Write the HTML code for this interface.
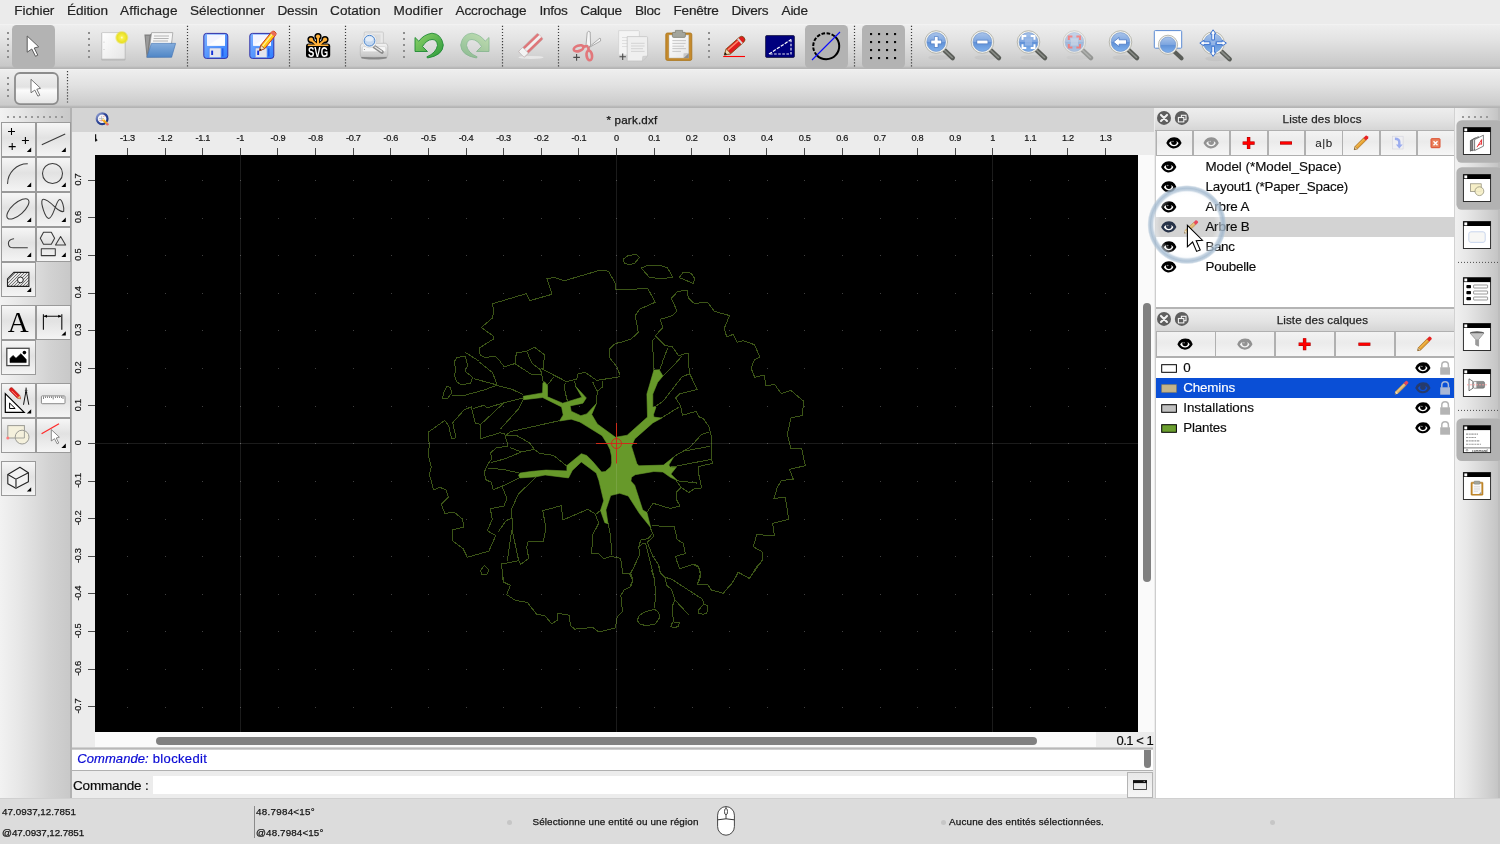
<!DOCTYPE html>
<html lang="fr"><head><meta charset="utf-8"><title>LibreCAD - park.dxf</title>
<style>
*{box-sizing:border-box;margin:0;padding:0}
html,body{width:1500px;height:844px;overflow:hidden;background:#ececec;font-family:"Liberation Sans",sans-serif}
#app{position:relative;width:1500px;height:844px;overflow:hidden;will-change:transform}
.a{position:absolute}
.t{position:absolute;white-space:pre}
svg{position:absolute;overflow:visible}
.lb{position:absolute;border:1px solid #9a9a9a;background:linear-gradient(#f6f6f6,#e2e2e2 45%,#f4f4f4)}
.db{position:absolute;border:1px solid #b4b4b4;background:linear-gradient(#f7f7f7,#ececec 50%,#f5f5f5)}
.chk{position:absolute;background:#b0b0b0;border-radius:5px}
</style></head><body><div id="app">
<div class="a" style="left:0px;top:0px;width:1500px;height:24px;background:#ebebeb"></div>
<div class="a" style="left:0px;top:24px;width:1500px;height:45px;background:linear-gradient(#f6f6f6 0,#eeeeee 1px,#e3e3e3 35%,#c8c8c8 42px,#b4b4b4 44px,#b4b4b4 100%)"></div>
<div class="a" style="left:0px;top:69px;width:1500px;height:39px;background:linear-gradient(#f6f6f6 0,#eeeeee 1px,#e2e2e2 40%,#cbcbcb 36px,#b4b4b4 38px,#b4b4b4 100%)"></div>
<svg style="left:0;top:0" width="1500" height="108" viewBox="0 0 1500 108"><defs>
<linearGradient id="gLens" x1="0" y1="0" x2="0" y2="1"><stop offset="0" stop-color="#a9c4ea"/><stop offset="0.48" stop-color="#7ea6e0"/><stop offset="0.5" stop-color="#5f90d6"/><stop offset="1" stop-color="#7fb0ec"/></linearGradient>
<linearGradient id="gSave" x1="0" y1="0" x2="1" y2="1"><stop offset="0" stop-color="#7fb2ff"/><stop offset="1" stop-color="#2f7dff"/></linearGradient>
<linearGradient id="gFold" x1="0" y1="0" x2="0" y2="1"><stop offset="0" stop-color="#86aedd"/><stop offset="1" stop-color="#4f86c6"/></linearGradient>
<linearGradient id="gUndo" x1="0" y1="0" x2="1" y2="1"><stop offset="0" stop-color="#8fd26a"/><stop offset="1" stop-color="#2b9a3a"/></linearGradient>
<linearGradient id="gPaper" x1="0" y1="0" x2="1" y2="1"><stop offset="0" stop-color="#ffffff"/><stop offset="1" stop-color="#e6e6e6"/></linearGradient>
<linearGradient id="gPrn" x1="0" y1="0" x2="0" y2="1"><stop offset="0" stop-color="#f4f4f4"/><stop offset="1" stop-color="#c4c4c4"/></linearGradient>
<radialGradient id="gStar"><stop offset="0" stop-color="#ffffe0"/><stop offset="0.22" stop-color="#f8f04a"/><stop offset="0.7" stop-color="#e9e024"/><stop offset="1" stop-color="#e8de22" stop-opacity="0"/></radialGradient>
<linearGradient id="gBtn2" x1="0" y1="0" x2="0" y2="1"><stop offset="0" stop-color="#f0f0f0"/><stop offset="0.45" stop-color="#e2e2e2"/><stop offset="0.55" stop-color="#fbfbfb"/><stop offset="1" stop-color="#e4e4e4"/></linearGradient>
<g id="mag"><ellipse cx="3" cy="15.5" rx="11" ry="2.6" fill="#000" opacity="0.045"/><path d="M8 8 L16.5 16" stroke="#5a5d58" stroke-width="4.6" stroke-linecap="round"/><path d="M8.5 8.5 L16 15.5" stroke="#8a8d88" stroke-width="1.6" stroke-linecap="round"/><circle r="11.3" fill="#f3f3ee" stroke="#a9a9a0" stroke-width="0.8"/><circle r="9.4" fill="url(#gLens)" stroke="#6a8fc8" stroke-width="0.6"/></g>
<g id="magS"><path d="M6 6.5 L13.5 13.5" stroke="#5a5d58" stroke-width="4.2" stroke-linecap="round"/><circle r="9.6" fill="#f3f3ee" stroke="#a9a9a0" stroke-width="0.8"/><circle r="7.8" fill="url(#gLens)" stroke="#6a8fc8" stroke-width="0.6"/></g>
<g id="arrowc"><path d="M0 0 L0 16.2 L4.6 13 L8.3 20.3 L10.6 19.2 L7 12 L11.5 10.8 Z" fill="#fff" stroke="#5c5c5c" stroke-width="1" stroke-linejoin="round"/></g>
</defs><rect x="7" y="32" width="2" height="2" fill="#8e8e8e"/><rect x="7" y="38" width="2" height="2" fill="#8e8e8e"/><rect x="7" y="44" width="2" height="2" fill="#8e8e8e"/><rect x="7" y="50" width="2" height="2" fill="#8e8e8e"/><rect x="7" y="56" width="2" height="2" fill="#8e8e8e"/><rect x="88" y="32" width="2" height="2" fill="#8e8e8e"/><rect x="88" y="38" width="2" height="2" fill="#8e8e8e"/><rect x="88" y="44" width="2" height="2" fill="#8e8e8e"/><rect x="88" y="50" width="2" height="2" fill="#8e8e8e"/><rect x="88" y="56" width="2" height="2" fill="#8e8e8e"/><rect x="403" y="32" width="2" height="2" fill="#8e8e8e"/><rect x="403" y="38" width="2" height="2" fill="#8e8e8e"/><rect x="403" y="44" width="2" height="2" fill="#8e8e8e"/><rect x="403" y="50" width="2" height="2" fill="#8e8e8e"/><rect x="403" y="56" width="2" height="2" fill="#8e8e8e"/><rect x="708" y="32" width="2" height="2" fill="#8e8e8e"/><rect x="708" y="38" width="2" height="2" fill="#8e8e8e"/><rect x="708" y="44" width="2" height="2" fill="#8e8e8e"/><rect x="708" y="50" width="2" height="2" fill="#8e8e8e"/><rect x="708" y="56" width="2" height="2" fill="#8e8e8e"/><rect x="7" y="77" width="2" height="2" fill="#8e8e8e"/><rect x="7" y="83" width="2" height="2" fill="#8e8e8e"/><rect x="7" y="89" width="2" height="2" fill="#8e8e8e"/><rect x="7" y="95" width="2" height="2" fill="#8e8e8e"/><path d="M186.9 26.40h1.2M186.9 29.44h1.2M186.9 32.48h1.2M186.9 35.52h1.2M186.9 38.56h1.2M186.9 41.60h1.2M186.9 44.64h1.2M186.9 47.68h1.2M186.9 50.72h1.2M186.9 53.76h1.2M186.9 56.80h1.2M186.9 59.84h1.2M186.9 62.88h1.2M186.9 65.92h1.2" stroke="#3a3a3a" stroke-width="1.2" fill="none"/><path d="M288.9 26.40h1.2M288.9 29.44h1.2M288.9 32.48h1.2M288.9 35.52h1.2M288.9 38.56h1.2M288.9 41.60h1.2M288.9 44.64h1.2M288.9 47.68h1.2M288.9 50.72h1.2M288.9 53.76h1.2M288.9 56.80h1.2M288.9 59.84h1.2M288.9 62.88h1.2M288.9 65.92h1.2" stroke="#3a3a3a" stroke-width="1.2" fill="none"/><path d="M344.9 26.40h1.2M344.9 29.44h1.2M344.9 32.48h1.2M344.9 35.52h1.2M344.9 38.56h1.2M344.9 41.60h1.2M344.9 44.64h1.2M344.9 47.68h1.2M344.9 50.72h1.2M344.9 53.76h1.2M344.9 56.80h1.2M344.9 59.84h1.2M344.9 62.88h1.2M344.9 65.92h1.2" stroke="#3a3a3a" stroke-width="1.2" fill="none"/><path d="M501.9 26.40h1.2M501.9 29.44h1.2M501.9 32.48h1.2M501.9 35.52h1.2M501.9 38.56h1.2M501.9 41.60h1.2M501.9 44.64h1.2M501.9 47.68h1.2M501.9 50.72h1.2M501.9 53.76h1.2M501.9 56.80h1.2M501.9 59.84h1.2M501.9 62.88h1.2M501.9 65.92h1.2" stroke="#3a3a3a" stroke-width="1.2" fill="none"/><path d="M557.9 26.40h1.2M557.9 29.44h1.2M557.9 32.48h1.2M557.9 35.52h1.2M557.9 38.56h1.2M557.9 41.60h1.2M557.9 44.64h1.2M557.9 47.68h1.2M557.9 50.72h1.2M557.9 53.76h1.2M557.9 56.80h1.2M557.9 59.84h1.2M557.9 62.88h1.2M557.9 65.92h1.2" stroke="#3a3a3a" stroke-width="1.2" fill="none"/><path d="M853.9 26.40h1.2M853.9 29.44h1.2M853.9 32.48h1.2M853.9 35.52h1.2M853.9 38.56h1.2M853.9 41.60h1.2M853.9 44.64h1.2M853.9 47.68h1.2M853.9 50.72h1.2M853.9 53.76h1.2M853.9 56.80h1.2M853.9 59.84h1.2M853.9 62.88h1.2M853.9 65.92h1.2" stroke="#3a3a3a" stroke-width="1.2" fill="none"/><path d="M910.9 26.40h1.2M910.9 29.44h1.2M910.9 32.48h1.2M910.9 35.52h1.2M910.9 38.56h1.2M910.9 41.60h1.2M910.9 44.64h1.2M910.9 47.68h1.2M910.9 50.72h1.2M910.9 53.76h1.2M910.9 56.80h1.2M910.9 59.84h1.2M910.9 62.88h1.2M910.9 65.92h1.2" stroke="#3a3a3a" stroke-width="1.2" fill="none"/><path d="M66.9 71.60h1.2M66.9 74.64h1.2M66.9 77.68h1.2M66.9 80.72h1.2M66.9 83.76h1.2M66.9 86.80h1.2M66.9 89.84h1.2M66.9 92.88h1.2M66.9 95.92h1.2M66.9 98.96h1.2M66.9 102.00h1.2" stroke="#3a3a3a" stroke-width="1.2" fill="none"/><rect x="12" y="25" width="43" height="43" rx="4.5" fill="#b3b3b3"/><rect x="805" y="25" width="43" height="43" rx="4.5" fill="#b3b3b3"/><rect x="862" y="25" width="43" height="43" rx="4.5" fill="#b3b3b3"/><use href="#arrowc" x="27.2" y="36"/><rect x="15" y="73" width="42.9" height="31.1" rx="5" fill="url(#gBtn2)" stroke="#8c8c8c" stroke-width="1.8"/><g transform="translate(31 79.3) scale(0.83)"><use href="#arrowc"/></g><rect x="101.3" y="32.6" width="24.2" height="27.8" rx="1" fill="#b0b0b0" opacity="0.9"/><rect x="101.8" y="32.6" width="23.2" height="26.4" rx="0.8" fill="url(#gPaper)" stroke="#c6c6c6" stroke-width="0.8"/><path d="M103.5 42.2h1M103.5 49.5h1" stroke="#c0c0c0" stroke-width="0.8"/><circle cx="121.8" cy="37.6" r="7" fill="url(#gStar)"/><path d="M144.4 34.6 L150 34.6 L152 33 L172 33 L172 57 L146.6 57.4 Z" fill="#7c7c7c"/><path d="M145.6 35.8 L149.6 35.8 L147.6 50 L147 54 Z" fill="#9a9a9a"/><path d="M151.6 32.6 L172.8 32.6 L171.6 43.5 L149 52 Z" fill="#f6f6f6" stroke="#9a9a9a" stroke-width="0.7"/><path d="M154 36h15M153.6 38.5h15M153 41h15" stroke="#b4b4b4" stroke-width="1.2"/><path d="M151.4 43.4 L175.6 43.4 L171.6 57.3 L146.9 57.3 Z" fill="url(#gFold)" stroke="#4a7ab8" stroke-width="0.7" stroke-linejoin="round"/><g transform="translate(203.2 0)"><rect x="0.6" y="33.4" width="24" height="25" rx="2.6" fill="url(#gSave)" stroke="#3232a8" stroke-width="1"/><rect x="3.8" y="34.6" width="18" height="11.2" fill="#f2f4ff"/><path d="M3.8 45.8 L21.8 34.6 L21.8 45.8Z" fill="#fff" opacity="0.7"/><rect x="6" y="48" width="11.8" height="9.6" fill="#e4e4ec" stroke="#4c7ce0" stroke-width="0.5"/><rect x="8" y="50.6" width="1.9" height="4.4" fill="#1432d8"/><rect x="19" y="48.4" width="1.2" height="8" fill="#1c50e8"/></g><g transform="translate(249.2 0)"><rect x="0.6" y="33.4" width="24" height="25" rx="2.6" fill="url(#gSave)" stroke="#3232a8" stroke-width="1"/><rect x="3.8" y="34.6" width="18" height="11.2" fill="#f2f4ff"/><path d="M3.8 45.8 L21.8 34.6 L21.8 45.8Z" fill="#fff" opacity="0.7"/><rect x="6" y="48" width="11.8" height="9.6" fill="#e4e4ec" stroke="#4c7ce0" stroke-width="0.5"/><rect x="8" y="50.6" width="1.9" height="4.4" fill="#1432d8"/><rect x="19" y="48.4" width="1.2" height="8" fill="#1c50e8"/></g><g transform="translate(259.6 50.8) rotate(-51)"><path d="M0 0 L5 -2.6 L22 -2.6 Q24.4 -2.6 24.4 0 Q24.4 2.6 22 2.6 L5 2.6 Z" fill="#ffc814" stroke="#c8321e" stroke-width="0.9" stroke-linejoin="round"/><path d="M5 -0.6 H21" stroke="#fff0a0" stroke-width="1.2"/><path d="M0 0 L5 -2.6 L5 2.6Z" fill="#f4e0c0" stroke="#8a3a1a" stroke-width="0.6"/><path d="M0 0 L2 -1 L2 1Z" fill="#222"/><rect x="20.5" y="-2.6" width="3.2" height="5.2" fill="#e86a5a"/></g><g><g fill="#000" stroke="#000" stroke-width="4.6" stroke-linejoin="round" stroke-linecap="round"><circle cx="318" cy="36.6" r="1.3"/><circle cx="311" cy="39.6" r="1.3"/><circle cx="325" cy="39.6" r="1.3"/><path d="M318 37V45M311.4 40L317 45M324.6 40L319 45" fill="none" stroke-width="4"/></g><rect x="306" y="43.4" width="24.2" height="14.4" rx="2.8" fill="#000"/><g fill="#ffb13b" stroke="#ffb13b" stroke-linecap="round"><circle cx="318" cy="36.6" r="2.1" stroke="none"/><circle cx="311" cy="39.6" r="2.1" stroke="none"/><circle cx="325" cy="39.6" r="2.1" stroke="none"/><path d="M318 37V45M311.4 40L317 45M324.6 40L319 45" fill="none" stroke-width="2.1"/><path d="M308.4 45.3H327.8" stroke-width="1.5"/></g><text transform="translate(318 56.9) scale(0.65 0.97)" text-anchor="middle" font-family="'Liberation Sans',sans-serif" font-weight="bold" font-size="14.6" fill="#fff">SVG</text></g><g><ellipse cx="374" cy="57.7" rx="13.2" ry="1.7" fill="#000" opacity="0.32"/><rect x="364.2" y="32" width="19.2" height="14" rx="1" fill="#e9e9e9" stroke="#c2c2c2" stroke-width="0.7"/><rect x="371" y="34.4" width="9.6" height="8" fill="#dcdcdc"/><path d="M362.6 43.3 L385.4 43.3 Q387.8 43.8 387.8 46.2 L387.8 55 Q387.8 57.3 385.4 57.3 L362.6 57.3 Q360.3 57.3 360.3 55 L360.3 46.2 Q360.3 43.8 362.6 43.3Z" fill="url(#gPrn)" stroke="#b4b4b4" stroke-width="0.7"/><rect x="362.4" y="46.6" width="23.4" height="5.2" rx="1.2" fill="#f7f7f7" stroke="#c6c6c6" stroke-width="0.5"/><circle cx="364.4" cy="49.4" r="0.5" fill="#777"/><path d="M361.8 57.5 Q374 58.6 386.2 57.5" stroke="#7a7a7a" stroke-width="1" fill="none" opacity="0.8"/><path d="M374 46.6 L382 52" stroke="#8a8a8a" stroke-width="3.6" stroke-linecap="round"/><path d="M375 47 L381.6 51.4" stroke="#e6e6e6" stroke-width="1.3" stroke-linecap="round"/><circle cx="369.5" cy="40.7" r="7.1" fill="#f6f6f6" stroke="#c4c4c4" stroke-width="0.5"/><circle cx="369.5" cy="40.7" r="5.4" fill="#c4d8f0" stroke="#4a84cc" stroke-width="1"/><ellipse cx="369.3" cy="39" rx="3.8" ry="2.6" fill="#fff" opacity="0.55"/></g><g transform="translate(414.5 33.4)"><path d="M0.5 4.1 L4.3 7.8 Q9 1.2 17.5 -0.2 Q27 0.4 28.8 11.6 Q28.4 22 13 24.6 L12.4 23.4 Q21.6 19.5 23 12 Q22.5 6 17.5 6.1 Q12 6.5 8 13.1 L13 18.1 L0.5 18.1 Z" fill="url(#gUndo)" stroke="#1f8a34" stroke-width="0.9" stroke-linejoin="round"/></g><g transform="translate(489.5 33.4) scale(-1 1)" opacity="0.42"><path d="M0.5 4.1 L4.3 7.8 Q9 1.2 17.5 -0.2 Q27 0.4 28.8 11.6 Q28.4 22 13 24.6 L12.4 23.4 Q21.6 19.5 23 12 Q22.5 6 17.5 6.1 Q12 6.5 8 13.1 L13 18.1 L0.5 18.1 Z" fill="url(#gUndo)" stroke="#1f8a34" stroke-width="0.9" stroke-linejoin="round"/></g><g opacity="0.8"><ellipse cx="531" cy="57.4" rx="12.5" ry="1.5" fill="#fff" opacity="0.6"/><g transform="translate(521.3 54.4) rotate(-44)"><rect x="0" y="-4.05" width="26.5" height="8.1" rx="1.2" fill="#df5c60" stroke="#b89090" stroke-width="0.5"/><rect x="0" y="-1.5" width="26.5" height="3" fill="#f4f4f4"/><rect x="0" y="-4.05" width="6" height="8.1" rx="0.8" fill="#fbfbfb" stroke="#b0b0b0" stroke-width="0.6"/></g></g><g><path d="M586 45.5 L587.2 32.4 Q588.6 30.4 590.2 32 L590.6 46.5 Z" fill="#f6f6f6" stroke="#9a9a9a" stroke-width="0.8" stroke-linejoin="round"/><path d="M588.5 47.5 L600 38 Q600.8 38.4 600.6 41 L590 47Z" fill="#f6f6f6" stroke="#9a9a9a" stroke-width="0.8" stroke-linejoin="round"/><g fill="none" stroke="#e2777b" stroke-width="2.7"><ellipse cx="578.6" cy="48.3" rx="5" ry="2.7" transform="rotate(-18 578.6 48.3)"/><ellipse cx="589.3" cy="55.4" rx="2.7" ry="4.9" transform="rotate(-8 589.3 55.4)"/><path d="M583.5 46.7 L588 46 M588.3 46.5 L588.6 50.5"/></g><path d="M573.3 57.4h6.6M576.6 54.1v6.6" stroke="#4a4a4a" stroke-width="1.1"/></g><g><path d="M618.6 30.6 H638.4 Q639.4 30.6 639.4 31.6 V55 H618.6Z" fill="#f4f4f4" stroke="#d0d0d0" stroke-width="0.7"/><path d="M622 37.5h12M622 40.5h12M622 43.5h12M622 46.5h12" stroke="#dcdcdc" stroke-width="0.9"/><path d="M627.2 36.6 H646.6 Q647.6 36.6 647.6 37.6 V56 L642.4 61 H627.2 Z" fill="#efefef" stroke="#c4c4c4" stroke-width="0.8"/><path d="M642.4 61 L642.8 56.4 L647.6 56Z" fill="#d4d4d4" stroke="#bdbdbd" stroke-width="0.5"/><path d="M631 43.3h13.6M631 46h13.6M631 48.7h12M631 51.4h13.6" stroke="#d0d0d0" stroke-width="0.9"/><path d="M619.5 56.8h6.4M622.7 53.6v6.4" stroke="#4a4a4a" stroke-width="1.1"/></g><g><rect x="665.8" y="33" width="26" height="27.4" rx="1.6" fill="#c58a2c" stroke="#a87218" stroke-width="0.8"/><rect x="669" y="35" width="19.8" height="23" fill="url(#gPaper)" stroke="#b9b9b0" stroke-width="0.5"/><path d="M683.4 58 L688.8 58 L688.8 53 Z" fill="#8c8c8c"/><path d="M683.4 58 L683.6 53.2 L688.8 53Z" fill="#c6c6c6"/><path d="M672.4 40.6h13.6M672.4 43.4h13.2M672.4 46.2h11.6M672.4 48.6h13.6M672.4 51.4h8.6" stroke="#c2c2c2" stroke-width="0.9"/><path d="M675.4 30.4 H682.6 V32.4 H685 Q685.4 32.4 685.4 33.4 V36.4 Q685.4 37.4 684.4 37.4 H673.6 Q672.4 37.4 672.4 36.4 V33.4 Q672.4 32.4 673 32.4 H675.4Z" fill="#a3a59c" stroke="#77796f" stroke-width="0.7"/></g><path d="M723.2 56.5H745" stroke="#ff0000" stroke-width="1.1"/><g transform="translate(724.3 55) rotate(-41.5)"><path d="M0 0 L5.6 -3.3 L23 -3.3 Q26.4 -3.3 26.4 0 Q26.4 3.3 23 3.3 L5.6 3.3 Z" fill="#e01c1c" stroke="#7a4a14" stroke-width="0.8" stroke-linejoin="round"/><path d="M5.8 -1.4 H20" stroke="#ff8a6a" stroke-width="1.4"/><path d="M0 0 L5.6 -3.3 L5.6 3.3Z" fill="#f0d8b0" stroke="#7a4a14" stroke-width="0.6"/><path d="M0 0 L2.4 -1.4 L2.4 1.4Z" fill="#111"/><rect x="20" y="-3.3" width="1.9" height="6.6" fill="#d8d8d8"/></g><rect x="765.6" y="35.6" width="28.8" height="21.8" rx="1.2" fill="#00007e" stroke="#14143c" stroke-width="0.8"/><path d="M769 54 L791 39.6" stroke="#fff" stroke-width="1.2" stroke-dasharray="3.4 1.3" fill="none"/><path d="M791 39.6 V54 H769" stroke="#e4e4f4" stroke-width="1.2" stroke-dasharray="2.6 1.5" fill="none"/><path d="M816.8 55.2 A13 13 0 1 0 834.6 36.3" stroke="#000" stroke-width="2" fill="none" transform="rotate(0)"/><path d="M834.6 36.3 A13 13 0 0 0 816.8 55.2" stroke="#000" stroke-width="2" stroke-dasharray="3.6 1.5" fill="none"/><path d="M812 60 L840 32" stroke="#0a0aff" stroke-width="1.1"/><rect x="870" y="33" width="2.1" height="2.1" fill="#0a0a0a"/><rect x="870" y="41" width="2.1" height="2.1" fill="#0a0a0a"/><rect x="870" y="49" width="2.1" height="2.1" fill="#0a0a0a"/><rect x="870" y="57" width="2.1" height="2.1" fill="#0a0a0a"/><rect x="878" y="33" width="2.1" height="2.1" fill="#0a0a0a"/><rect x="878" y="41" width="2.1" height="2.1" fill="#0a0a0a"/><rect x="878" y="49" width="2.1" height="2.1" fill="#0a0a0a"/><rect x="878" y="57" width="2.1" height="2.1" fill="#0a0a0a"/><rect x="886" y="33" width="2.1" height="2.1" fill="#0a0a0a"/><rect x="886" y="41" width="2.1" height="2.1" fill="#0a0a0a"/><rect x="886" y="49" width="2.1" height="2.1" fill="#0a0a0a"/><rect x="886" y="57" width="2.1" height="2.1" fill="#0a0a0a"/><rect x="894" y="33" width="2.1" height="2.1" fill="#0a0a0a"/><rect x="894" y="41" width="2.1" height="2.1" fill="#0a0a0a"/><rect x="894" y="49" width="2.1" height="2.1" fill="#0a0a0a"/><rect x="894" y="57" width="2.1" height="2.1" fill="#0a0a0a"/><g transform="translate(936.2 42)"><use href="#mag"/><path d="M-5.6 0H5.6M0 -5.6V5.6" stroke="#4a78c0" stroke-width="4.4"/><path d="M-5 0H5M0 -5V5" stroke="#fff" stroke-width="3"/></g><g transform="translate(982.4 42)"><use href="#mag"/><path d="M-5.8 0H5.8" stroke="#4a78c0" stroke-width="4.4"/><path d="M-5.2 0H5.2" stroke="#fff" stroke-width="3"/></g><g transform="translate(1028.5 42)"><use href="#mag"/><rect x="-3.6" y="-3.6" width="7.2" height="7.2" fill="#9fbdea" opacity="0.7"/><path d="M-6 -2.2V-6H-2.2M2.2 -6H6V-2.2M6 2.2V6H2.2M-2.2 6H-6V2.2" stroke="#fff" stroke-width="1.9" fill="none"/></g><g transform="translate(1074.4 42)" opacity="0.5"><use href="#mag"/><rect x="-3.6" y="-3.6" width="7.2" height="7.2" fill="#bcd0ee" opacity="0.7"/><path d="M-5.6 -2V-5.6H-2M2 -5.6H5.6V-2M5.6 2V5.6H2M-2 5.6H-5.6V2" stroke="#ff2a2a" stroke-width="2" fill="none"/></g><g transform="translate(1120.5 42)"><use href="#mag"/><path d="M-7 0 L-1.4 -4.6 V-2.2 H6 V2.2 H-1.4 V4.6 Z" fill="#fff" stroke="#3f70c0" stroke-width="0.7"/></g><rect x="1154.3" y="30.6" width="27.4" height="17.6" rx="1" fill="#fff" stroke="#5b8bd4" stroke-width="1"/><g transform="translate(1168 44.8)"><use href="#magS"/></g><g transform="translate(1213.1 43.1)"><use href="#mag"/><rect x="-2" y="-2" width="4" height="4" fill="#9dbcea" opacity="0.8"/><g transform="rotate(0)"><path d="M0 -13.3 L2.8 -9.2 H1.3 V-3.2 H-1.3 V-9.2 H-2.8 Z" fill="#fff" stroke="#3a72d0" stroke-width="1" stroke-linejoin="round"/></g><g transform="rotate(90)"><path d="M0 -13.3 L2.8 -9.2 H1.3 V-3.2 H-1.3 V-9.2 H-2.8 Z" fill="#fff" stroke="#3a72d0" stroke-width="1" stroke-linejoin="round"/></g><g transform="rotate(180)"><path d="M0 -13.3 L2.8 -9.2 H1.3 V-3.2 H-1.3 V-9.2 H-2.8 Z" fill="#fff" stroke="#3a72d0" stroke-width="1" stroke-linejoin="round"/></g><g transform="rotate(270)"><path d="M0 -13.3 L2.8 -9.2 H1.3 V-3.2 H-1.3 V-9.2 H-2.8 Z" fill="#fff" stroke="#3a72d0" stroke-width="1" stroke-linejoin="round"/></g></g></svg>
<div class="a" style="left:0px;top:108px;width:71px;height:690px;background:linear-gradient(90deg,#f2f2f2 0,#e8e8e8 25%,#d2d2d2 70%,#c8c8c8 100%)"></div>
<div class="a" style="left:70px;top:108px;width:2px;height:690px;background:#b2b2b2"></div>
<div class="lb" style="left:1px;top:122px;width:35px;height:35.0px;"></div>
<div class="lb" style="left:36px;top:122px;width:35px;height:35.0px;"></div>
<div class="lb" style="left:1px;top:157px;width:35px;height:35.0px;"></div>
<div class="lb" style="left:36px;top:157px;width:35px;height:35.0px;"></div>
<div class="lb" style="left:1px;top:192px;width:35px;height:35.0px;"></div>
<div class="lb" style="left:36px;top:192px;width:35px;height:35.0px;"></div>
<div class="lb" style="left:1px;top:227px;width:35px;height:35.0px;"></div>
<div class="lb" style="left:36px;top:227px;width:35px;height:35.0px;"></div>
<div class="lb" style="left:1px;top:262px;width:35px;height:35.0px;"></div>
<div class="lb" style="left:1px;top:305px;width:35px;height:35.0px;"></div>
<div class="lb" style="left:36px;top:305px;width:35px;height:35.0px;"></div>
<div class="lb" style="left:1px;top:340px;width:35px;height:35.0px;"></div>
<div class="lb" style="left:1px;top:383px;width:35px;height:35.0px;"></div>
<div class="lb" style="left:36px;top:383px;width:35px;height:35.0px;"></div>
<div class="lb" style="left:1px;top:418px;width:35px;height:35.0px;"></div>
<div class="lb" style="left:36px;top:418px;width:35px;height:35.0px;"></div>
<div class="lb" style="left:1px;top:461px;width:35px;height:35.0px;"></div>
<svg style="left:0;top:108px" width="72" height="400" viewBox="0 108 72 400"><rect x="7" y="116" width="2" height="2" fill="#999"/><rect x="13" y="116" width="2" height="2" fill="#999"/><rect x="19" y="116" width="2" height="2" fill="#999"/><rect x="25" y="116" width="2" height="2" fill="#999"/><rect x="31" y="116" width="2" height="2" fill="#999"/><rect x="37" y="116" width="2" height="2" fill="#999"/><rect x="43" y="116" width="2" height="2" fill="#999"/><rect x="49" y="116" width="2" height="2" fill="#999"/><rect x="55" y="116" width="2" height="2" fill="#999"/><rect x="61" y="116" width="2" height="2" fill="#999"/><path d="M8 131.4h7M11.5 127.9v7M21.9 140.4h7M25.4 136.9v7M8.7 146.6h7M12.2 143.1v7" stroke="#000" stroke-width="1.05" fill="none"/><path d="M31.2 147.6 V151.9 H26.799999999999997Z" fill="#000"/><path d="M65.8 147.6 V151.9 H61.4Z" fill="#000"/><path d="M41.8 144.7 L65.2 133.9" fill="none" stroke="#3a3a3a" stroke-width="1.05"/><path d="M7.6 183.4 A19.8 19.8 0 0 1 27.4 163.8" fill="none" stroke="#3a3a3a" stroke-width="1.05" stroke-linecap="round"/><circle cx="52.5" cy="173.5" r="10" fill="none" stroke="#3a3a3a" stroke-width="1.05"/><path d="M31.2 182.6 V186.9 H26.799999999999997Z" fill="#000"/><path d="M65.8 182.6 V186.9 H61.4Z" fill="#000"/><ellipse cx="17.9" cy="208.9" rx="13.8" ry="5.9" transform="rotate(-41.5 17.9 208.9)" fill="none" stroke="#3a3a3a" stroke-width="1.05"/><path d="M55.3 207.4 C50.5 202.5 44 197.5 42.3 199.8 C40.5 203 45 218 48.8 218.4 C51.5 218.5 53.5 212 55.3 207.4 C56.5 204 58 199.5 59.8 199.5 C62 199.5 64.5 208 63.7 211.4 C62.5 212.3 58.5 210.3 55.3 207.4Z" fill="none" stroke="#3a3a3a" stroke-width="1.05"/><path d="M31.2 217.6 V221.9 H26.799999999999997Z" fill="#000"/><path d="M65.8 217.6 V221.9 H61.4Z" fill="#000"/><path d="M13.6 238.8 Q8.4 239.6 8.4 243.4 Q8.6 247.8 13.4 247.8 L27.4 247.8" fill="none" stroke="#3a3a3a" stroke-width="1.05" stroke-linecap="round"/><path d="M40.3 238.3L43.5 232.3H51.3L54.6 238.3L51.3 244.3H43.5ZM55.5 245L60.6 236.5L65.6 245ZM41.3 248.8H55.3V255.6H41.3Z" fill="none" stroke="#3a3a3a" stroke-width="1.05" stroke-linejoin="round"/><path d="M31.2 252.6 V256.9 H26.799999999999997Z" fill="#000"/><path d="M65.8 252.6 V256.9 H61.4Z" fill="#000"/><clipPath id="hc"><path d="M7.5 278.9L13.9 272.4H28.9V286.4H7.5Z"/></clipPath><g clip-path="url(#hc)"><rect x="7" y="272" width="22" height="15" fill="#e4e4e4"/><path d="M2 286L16 272M5 286L19 272M8 286L22 272M11 286L25 272M14 286L28 272M17 286L31 272M20 286L34 272M23 286L37 272M26 286L40 272M-1 286L13 272" stroke="#4a4a4a" stroke-width="0.7"/></g><path d="M7.5 278.9L13.9 272.4H28.9V286.4H7.5Z" fill="none" stroke="#222" stroke-width="1.1"/><circle cx="20.4" cy="279.9" r="2.9" fill="#f4f4f4" stroke="#222" stroke-width="1"/><path d="M31.2 287.6 V291.90000000000003 H26.799999999999997Z" fill="#000"/><text x="18.2" y="331.8" text-anchor="middle" font-family="'Liberation Serif',serif" font-size="29" fill="#000">A</text><path d="M43.4 314.3V329.8M61.8 314.3V329.8M44 316.3H61" stroke="#111" stroke-width="1.1" fill="none"/><path d="M43.8 316.3L47 314.8V317.8ZM61.4 316.3L58.2 314.8V317.8Z" fill="#000"/><path d="M65.8 331.20000000000005 V335.50000000000006 H61.4Z" fill="#000"/><rect x="6.8" y="348.3" width="22.3" height="17.3" fill="#fff" stroke="#4a4a4a" stroke-width="1.3"/><path d="M10 362.6V358.4L13 355.4L16 358.3L20.9 353.7L26.2 359.4V362.6Z" fill="#000" stroke="#000" stroke-width="0.6" stroke-linejoin="round"/><circle cx="24.4" cy="352.6" r="1.8" fill="#000"/><path d="M5.3 393.6V412.4H24.2Z" fill="#fff" stroke="#000" stroke-width="1.2" stroke-linejoin="miter"/><path d="M9.6 403V408.5H15.2Z" fill="#fff" stroke="#000" stroke-width="1"/><g transform="translate(20.6 398.9) rotate(-135)"><path d="M0 0L3 -1.9H13.4Q15 -1.9 15 0Q15 1.9 13.4 1.9H3Z" fill="#e01c1c" stroke="#8a1c10" stroke-width="0.5"/><path d="M0 0L3 -1.9V1.9Z" fill="#e8b070"/><path d="M4 -0.6H12" stroke="#ff8a7a" stroke-width="0.9"/></g><path d="M26.1 387.6V390M26.1 390.5L23.5 404.8M26.1 390.5L28.8 404.8M25 392.5H27.2" stroke="#111" stroke-width="1" fill="none"/><circle cx="26.1" cy="390.6" r="1.2" fill="#444"/><path d="M31.2 409.20000000000005 V413.50000000000006 H26.799999999999997Z" fill="#000"/><rect x="41.4" y="395.9" width="23.6" height="7.8" rx="0.8" fill="#fdfdfd" stroke="#8a8a8a" stroke-width="1"/><path d="M43.5 396.4v2.6M45.5 396.4v1.6M47.5 396.4v1.6M49.5 396.4v1.6M51.5 396.4v1.6M53.2 396.4v3M55.5 396.4v1.6M57.5 396.4v1.6M59.5 396.4v1.6M61.5 396.4v1.6M63 396.4v2.6" stroke="#555" stroke-width="0.7"/><rect x="7.8" y="425.6" width="16.6" height="12.4" fill="#f4f0dc" stroke="#9a9a94" stroke-width="1"/><circle cx="22.1" cy="437.1" r="6.9" fill="#f4f0dc" stroke="#9a9a94" stroke-width="1"/><path d="M15.4 438H24.4V430.6" fill="none" stroke="#a4a49c" stroke-width="1"/><circle cx="7.8" cy="438.1" r="1.5" fill="#ff7a7a"/><path d="M41.6 433.7L59 423.8" stroke="#ff2a2a" stroke-width="1.3"/><g transform="translate(51.3 429.6) scale(0.7)"><use href="#arrowc"/></g><path d="M65.8 443.6 V447.90000000000003 H61.4Z" fill="#000"/><path d="M7.8 474.5L19.9 467.3L28.4 472.8V481.7L15.9 488.3L7.8 483.7Z" fill="#f2f2f2" stroke="#222" stroke-width="1.1" stroke-linejoin="round"/><path d="M7.8 474.5L15.9 479.2L28.4 472.8M15.9 479.2V488.3" fill="none" stroke="#222" stroke-width="1.1"/><path d="M15.9 479.2V488.3" stroke="#777" stroke-width="1.6"/><path d="M31.2 487.20000000000005 V491.50000000000006 H26.799999999999997Z" fill="#000"/></svg>
<div class="a" style="left:72px;top:108px;width:1082px;height:24px;background:#d4d4d4"></div>
<svg style="left:92px;top:110px" width="20" height="20" viewBox="92 110 20 20"><defs><linearGradient id="gLC" x1="0" y1="0" x2="1" y2="1"><stop offset="0" stop-color="#a4b0dc"/><stop offset="0.45" stop-color="#2c4496"/><stop offset="1" stop-color="#1c3484"/></linearGradient></defs><circle cx="102.1" cy="118.7" r="5.4" fill="#f4f4f6" stroke="url(#gLC)" stroke-width="2.2"/><path d="M99 118.6h5M101.6 116v5.4" stroke="#b0b0b8" stroke-width="0.7"/><path d="M99.4 120.6h3.4M103.2 116.6l1.6 -0.8" stroke="#e89090" stroke-width="0.8"/><path d="M102.6 119.4L107 123.8" stroke="#f4a81c" stroke-width="2.2"/><path d="M103 119L104 120" stroke="#ffe890" stroke-width="1.6"/><circle cx="107.4" cy="124.2" r="1.3" fill="#e46a6a"/></svg>
<div class="a" style="left:72px;top:132px;width:1082px;height:23px;background:#ececec"></div>
<div class="a" style="left:72px;top:155px;width:23px;height:592px;background:#ececec"></div>
<div class="a" style="left:95px;top:155px;width:1043px;height:577px;background:#000"></div>
<svg style="left:72px;top:132px" width="1082" height="616" viewBox="72 132 1082 616"><path d="M127 707.5h1M127 669.5h1M127 631.5h1M127 594.5h1M127 556.5h1M127 519.5h1M127 481.5h1M127 443.5h1M127 406.5h1M127 368.5h1M127 330.5h1M127 293.5h1M127 255.5h1M127 218.5h1M127 180.5h1M165 707.5h1M165 669.5h1M165 631.5h1M165 594.5h1M165 556.5h1M165 519.5h1M165 481.5h1M165 443.5h1M165 406.5h1M165 368.5h1M165 330.5h1M165 293.5h1M165 255.5h1M165 218.5h1M165 180.5h1M202 707.5h1M202 669.5h1M202 631.5h1M202 594.5h1M202 556.5h1M202 519.5h1M202 481.5h1M202 443.5h1M202 406.5h1M202 368.5h1M202 330.5h1M202 293.5h1M202 255.5h1M202 218.5h1M202 180.5h1M240 707.5h1M240 669.5h1M240 631.5h1M240 594.5h1M240 556.5h1M240 519.5h1M240 481.5h1M240 443.5h1M240 406.5h1M240 368.5h1M240 330.5h1M240 293.5h1M240 255.5h1M240 218.5h1M240 180.5h1M278 707.5h1M278 669.5h1M278 631.5h1M278 594.5h1M278 556.5h1M278 519.5h1M278 481.5h1M278 443.5h1M278 406.5h1M278 368.5h1M278 330.5h1M278 293.5h1M278 255.5h1M278 218.5h1M278 180.5h1M315 707.5h1M315 669.5h1M315 631.5h1M315 594.5h1M315 556.5h1M315 519.5h1M315 481.5h1M315 443.5h1M315 406.5h1M315 368.5h1M315 330.5h1M315 293.5h1M315 255.5h1M315 218.5h1M315 180.5h1M353 707.5h1M353 669.5h1M353 631.5h1M353 594.5h1M353 556.5h1M353 519.5h1M353 481.5h1M353 443.5h1M353 406.5h1M353 368.5h1M353 330.5h1M353 293.5h1M353 255.5h1M353 218.5h1M353 180.5h1M391 707.5h1M391 669.5h1M391 631.5h1M391 594.5h1M391 556.5h1M391 519.5h1M391 481.5h1M391 443.5h1M391 406.5h1M391 368.5h1M391 330.5h1M391 293.5h1M391 255.5h1M391 218.5h1M391 180.5h1M428 707.5h1M428 669.5h1M428 631.5h1M428 594.5h1M428 556.5h1M428 519.5h1M428 481.5h1M428 443.5h1M428 406.5h1M428 368.5h1M428 330.5h1M428 293.5h1M428 255.5h1M428 218.5h1M428 180.5h1M466 707.5h1M466 669.5h1M466 631.5h1M466 594.5h1M466 556.5h1M466 519.5h1M466 481.5h1M466 443.5h1M466 406.5h1M466 368.5h1M466 330.5h1M466 293.5h1M466 255.5h1M466 218.5h1M466 180.5h1M503 707.5h1M503 669.5h1M503 631.5h1M503 594.5h1M503 556.5h1M503 519.5h1M503 481.5h1M503 443.5h1M503 406.5h1M503 368.5h1M503 330.5h1M503 293.5h1M503 255.5h1M503 218.5h1M503 180.5h1M541 707.5h1M541 669.5h1M541 631.5h1M541 594.5h1M541 556.5h1M541 519.5h1M541 481.5h1M541 443.5h1M541 406.5h1M541 368.5h1M541 330.5h1M541 293.5h1M541 255.5h1M541 218.5h1M541 180.5h1M579 707.5h1M579 669.5h1M579 631.5h1M579 594.5h1M579 556.5h1M579 519.5h1M579 481.5h1M579 443.5h1M579 406.5h1M579 368.5h1M579 330.5h1M579 293.5h1M579 255.5h1M579 218.5h1M579 180.5h1M616 707.5h1M616 669.5h1M616 631.5h1M616 594.5h1M616 556.5h1M616 519.5h1M616 481.5h1M616 443.5h1M616 406.5h1M616 368.5h1M616 330.5h1M616 293.5h1M616 255.5h1M616 218.5h1M616 180.5h1M654 707.5h1M654 669.5h1M654 631.5h1M654 594.5h1M654 556.5h1M654 519.5h1M654 481.5h1M654 443.5h1M654 406.5h1M654 368.5h1M654 330.5h1M654 293.5h1M654 255.5h1M654 218.5h1M654 180.5h1M692 707.5h1M692 669.5h1M692 631.5h1M692 594.5h1M692 556.5h1M692 519.5h1M692 481.5h1M692 443.5h1M692 406.5h1M692 368.5h1M692 330.5h1M692 293.5h1M692 255.5h1M692 218.5h1M692 180.5h1M729 707.5h1M729 669.5h1M729 631.5h1M729 594.5h1M729 556.5h1M729 519.5h1M729 481.5h1M729 443.5h1M729 406.5h1M729 368.5h1M729 330.5h1M729 293.5h1M729 255.5h1M729 218.5h1M729 180.5h1M767 707.5h1M767 669.5h1M767 631.5h1M767 594.5h1M767 556.5h1M767 519.5h1M767 481.5h1M767 443.5h1M767 406.5h1M767 368.5h1M767 330.5h1M767 293.5h1M767 255.5h1M767 218.5h1M767 180.5h1M804 707.5h1M804 669.5h1M804 631.5h1M804 594.5h1M804 556.5h1M804 519.5h1M804 481.5h1M804 443.5h1M804 406.5h1M804 368.5h1M804 330.5h1M804 293.5h1M804 255.5h1M804 218.5h1M804 180.5h1M842 707.5h1M842 669.5h1M842 631.5h1M842 594.5h1M842 556.5h1M842 519.5h1M842 481.5h1M842 443.5h1M842 406.5h1M842 368.5h1M842 330.5h1M842 293.5h1M842 255.5h1M842 218.5h1M842 180.5h1M880 707.5h1M880 669.5h1M880 631.5h1M880 594.5h1M880 556.5h1M880 519.5h1M880 481.5h1M880 443.5h1M880 406.5h1M880 368.5h1M880 330.5h1M880 293.5h1M880 255.5h1M880 218.5h1M880 180.5h1M917 707.5h1M917 669.5h1M917 631.5h1M917 594.5h1M917 556.5h1M917 519.5h1M917 481.5h1M917 443.5h1M917 406.5h1M917 368.5h1M917 330.5h1M917 293.5h1M917 255.5h1M917 218.5h1M917 180.5h1M955 707.5h1M955 669.5h1M955 631.5h1M955 594.5h1M955 556.5h1M955 519.5h1M955 481.5h1M955 443.5h1M955 406.5h1M955 368.5h1M955 330.5h1M955 293.5h1M955 255.5h1M955 218.5h1M955 180.5h1M992 707.5h1M992 669.5h1M992 631.5h1M992 594.5h1M992 556.5h1M992 519.5h1M992 481.5h1M992 443.5h1M992 406.5h1M992 368.5h1M992 330.5h1M992 293.5h1M992 255.5h1M992 218.5h1M992 180.5h1M1030 707.5h1M1030 669.5h1M1030 631.5h1M1030 594.5h1M1030 556.5h1M1030 519.5h1M1030 481.5h1M1030 443.5h1M1030 406.5h1M1030 368.5h1M1030 330.5h1M1030 293.5h1M1030 255.5h1M1030 218.5h1M1030 180.5h1M1068 707.5h1M1068 669.5h1M1068 631.5h1M1068 594.5h1M1068 556.5h1M1068 519.5h1M1068 481.5h1M1068 443.5h1M1068 406.5h1M1068 368.5h1M1068 330.5h1M1068 293.5h1M1068 255.5h1M1068 218.5h1M1068 180.5h1M1105 707.5h1M1105 669.5h1M1105 631.5h1M1105 594.5h1M1105 556.5h1M1105 519.5h1M1105 481.5h1M1105 443.5h1M1105 406.5h1M1105 368.5h1M1105 330.5h1M1105 293.5h1M1105 255.5h1M1105 218.5h1M1105 180.5h1" stroke="#404040" stroke-width="1" fill="none" shape-rendering="crispEdges"/><path d="M127.5 148V155M165.5 148V155M202.5 148V155M240.5 148V155M277.5 148V155M315.5 148V155M353.5 148V155M390.5 148V155M428.5 148V155M466.5 148V155M503.5 148V155M541.5 148V155M578.5 148V155M616.5 148V155M654.5 148V155M691.5 148V155M729.5 148V155M766.5 148V155M804.5 148V155M842.5 148V155M879.5 148V155M917.5 148V155M955.5 148V155M992.5 148V155M1030.5 148V155M1067.5 148V155M1105.5 148V155M88 706.5H95M88 669.5H95M88 631.5H95M88 593.5H95M88 556.5H95M88 518.5H95M88 481.5H95M88 443.5H95M88 405.5H95M88 368.5H95M88 330.5H95M88 293.5H95M88 255.5H95M88 217.5H95M88 180.5H95" stroke="#4a4a4a" stroke-width="1" fill="none" shape-rendering="crispEdges"/><g font-family="'Liberation Sans',sans-serif" font-size="9.2" fill="#141414" stroke="#141414" stroke-width="0.2" text-anchor="middle" letter-spacing="-0.3"><text x="127.4" y="141.3">-1.3</text><text x="165.1" y="141.3">-1.2</text><text x="202.7" y="141.3">-1.1</text><text x="240.3" y="141.3">-1</text><text x="277.9" y="141.3">-0.9</text><text x="315.5" y="141.3">-0.8</text><text x="353.2" y="141.3">-0.7</text><text x="390.8" y="141.3">-0.6</text><text x="428.4" y="141.3">-0.5</text><text x="466.0" y="141.3">-0.4</text><text x="503.6" y="141.3">-0.3</text><text x="541.3" y="141.3">-0.2</text><text x="578.9" y="141.3">-0.1</text><text x="616.5" y="141.3">0</text><text x="654.1" y="141.3">0.1</text><text x="691.7" y="141.3">0.2</text><text x="729.4" y="141.3">0.3</text><text x="767.0" y="141.3">0.4</text><text x="804.6" y="141.3">0.5</text><text x="842.2" y="141.3">0.6</text><text x="879.8" y="141.3">0.7</text><text x="917.5" y="141.3">0.8</text><text x="955.1" y="141.3">0.9</text><text x="992.7" y="141.3">1</text><text x="1030.3" y="141.3">1.1</text><text x="1067.9" y="141.3">1.2</text><text x="1105.6" y="141.3">1.3</text><text transform="translate(81.4 706.1) rotate(-90)">-0.7</text><text transform="translate(81.4 668.5) rotate(-90)">-0.6</text><text transform="translate(81.4 630.9) rotate(-90)">-0.5</text><text transform="translate(81.4 593.3) rotate(-90)">-0.4</text><text transform="translate(81.4 555.7) rotate(-90)">-0.3</text><text transform="translate(81.4 518.0) rotate(-90)">-0.2</text><text transform="translate(81.4 480.4) rotate(-90)">-0.1</text><text transform="translate(81.4 442.8) rotate(-90)">0</text><text transform="translate(81.4 405.2) rotate(-90)">0.1</text><text transform="translate(81.4 367.6) rotate(-90)">0.2</text><text transform="translate(81.4 329.9) rotate(-90)">0.3</text><text transform="translate(81.4 292.3) rotate(-90)">0.4</text><text transform="translate(81.4 254.7) rotate(-90)">0.5</text><text transform="translate(81.4 217.1) rotate(-90)">0.6</text><text transform="translate(81.4 179.5) rotate(-90)">0.7</text></g><path d="M95.6 134.3V141.6" stroke="#161616" stroke-width="1.2" fill="none"/><path d="M96 138.4L97.7 140.2L96 141.3Z" fill="#161616"/><path d="M620.0 289.5L615.7 289.5L615.3 283.3L608.4 271.3L604.0 270.4L599.3 270.4L564.0 280.8L554.7 277.6L546.9 278.4L552.0 294.3L529.6 300.7L526.4 293.6L492.7 303.7L493.6 312.7L492.4 318.0L481.3 327.5L493.7 336.4L493.3 339.1L479.3 348.0L479.6 353.3L480.7 355.3L485.3 357.5L495.3 356.3L500.7 362.0M454.0 362.0L456.7 357.7L465.3 356.1L466.7 362.0M465.3 352.4L479.3 361.3M515.3 362.0L516.3 352.9L526.7 351.3L534.4 347.3L544.7 354.9L543.7 362.0M526.7 351.3L531.3 362.0M620.0 342.0L614.0 344.4L609.3 349.3L609.3 357.3L612.7 362.0M622.9 259.6L628.3 255.3L636.3 254.7L639.7 257.3L634.7 263.1L630.0 264.7L624.7 263.3L622.9 259.6M641.3 268.0L648.0 265.3L659.3 265.3L667.3 267.6L672.9 277.3L660.7 278.7L649.3 277.3L641.3 268.0M679.3 277.6L682.7 272.7L686.7 272.0L691.3 273.3L694.9 278.7L693.1 283.3L679.3 277.6M620.0 289.5L648.0 288.7L655.1 302.3L639.7 309.1L635.3 315.6L638.3 332.4L630.9 339.1L620.0 342.7M655.3 335.7L662.7 327.7L660.3 319.3L672.7 315.6L676.9 310.7L671.3 298.3L677.6 291.6L687.3 290.0L688.3 298.0L694.4 303.6L707.3 302.0L714.3 311.3L729.6 315.6L724.3 328.3L726.7 336.9L733.3 334.3L737.3 342.3L743.3 340.7L754.4 344.7L760.0 357.3L754.9 359.3L753.3 362.0M655.3 335.7L664.7 345.3L672.3 346.9L678.7 355.7L688.0 352.9L688.9 362.0M654.9 338.0L652.7 340.4L653.3 362.0M667.7 348.0L662.4 362.0M682.0 356.0L676.7 362.0M454.0 362.0L456.0 370.0L454.4 374.7L456.7 382.0L461.6 384.9L470.7 383.1L472.7 377.3L466.0 372.0L465.3 368.7L467.6 366.0L466.7 362.0M446.7 386.4L450.4 387.3L451.6 393.3L447.7 398.3L442.4 398.3L444.0 392.0L446.7 386.4M451.6 395.1L457.3 396.0L465.3 395.1L484.0 390.0L496.7 385.3L512.0 389.3L523.3 394.7M479.3 362.0L492.7 372.7L496.7 384.0M474.0 378.7L496.7 384.9M500.0 362.0L504.3 366.7L514.9 363.6L515.3 362.0M514.9 363.6L531.3 374.3L540.7 374.7M531.3 362.0L532.7 364.0L540.7 370.0L543.3 382.0M544.0 362.0L543.3 368.7L541.3 368.7L566.7 381.7M554.0 376.7L547.7 384.7M566.7 381.7L576.7 379.1L578.0 373.7L585.3 372.4L596.7 380.4L620.0 376.7M565.3 383.3L564.0 387.3L567.3 400.7M574.7 381.3L576.0 387.3M592.7 382.0L597.3 391.3L602.7 386.7L602.4 380.7M597.3 391.3L596.3 403.6M613.3 362.0L617.1 367.3L620.0 375.3M523.3 398.0L504.0 402.7L486.7 408.0L484.0 405.3L473.3 408.4M428.0 432.4L444.7 420.4L448.7 426.0L451.7 438.7L456.0 437.7L452.7 422.7L464.0 410.0L471.3 406.7L475.3 423.3L480.7 424.4L480.7 438.7L500.0 432.7L504.7 434.0L508.0 446.0L496.0 448.0L490.7 452.7L491.7 458.7L488.0 464.0L484.7 471.3L484.7 474.0M428.0 432.4L429.3 444.7L428.3 455.3L431.3 467.3L429.3 474.0M504.0 402.7L480.7 424.4M523.3 399.3L518.7 408.7L500.7 428.7M559.3 420.7L510.7 431.6L506.0 435.1L516.0 435.1L529.3 442.7L534.4 449.3L539.3 453.3L553.3 455.3L566.7 466.0M509.6 447.3L521.3 452.0L534.4 449.3M521.3 452.0L505.3 458.7L490.7 462.7M488.0 468.3L502.7 469.3L518.7 472.9M753.3 362.0L751.3 368.7L754.7 377.3L764.0 374.9L766.0 385.7L774.7 384.4L781.3 393.7L790.7 390.3L803.3 400.9L802.7 415.3L790.9 418.0L787.3 434.7L790.9 448.4L801.6 448.4L805.3 465.7L789.3 469.3L791.3 474.0M653.3 362.0L653.6 370.0M662.7 362.0L659.7 369.7M677.3 362.0L663.3 376.0M688.3 362.0L689.6 373.7L682.0 376.9L663.3 400.9L654.0 407.6M689.6 373.7L697.3 389.3L679.3 394.0L675.7 398.0L680.7 406.0L682.4 415.3L696.3 411.3L698.7 416.7L703.3 418.7L708.7 426.0L712.0 438.7L711.3 448.7L711.6 459.3L712.7 463.3L698.0 466.7L698.7 474.0M679.3 406.9L661.3 418.0M708.7 432.0L701.3 434.7L690.0 447.3L674.0 456.4M710.0 446.3L682.7 451.3M711.6 459.3L670.0 467.3M429.3 474.0L433.6 490.0L439.7 487.3L446.0 489.7L448.3 497.3L441.3 504.0L444.7 513.3L454.4 512.4L462.7 519.3L463.7 527.3L452.4 529.7L452.4 540.7L463.3 548.9L467.3 557.3L488.9 551.1L495.7 535.6L487.3 530.7L492.3 519.3L490.3 508.7L504.0 506.0L506.9 498.3L502.0 486.3L493.1 489.7L491.3 482.3L485.6 479.6L484.7 474.0M502.0 486.3L520.0 477.7M536.0 477.3L518.4 494.0L511.3 509.7L512.0 518.0L512.7 532.7L518.7 560.7L520.7 564.4L528.7 558.3L526.7 547.3L528.3 541.3L543.3 542.0L546.0 528.0L542.7 510.7L561.3 505.7L562.9 520.0L587.7 509.3L595.3 514.0L598.7 523.3L592.7 534.7L591.7 553.3L598.7 553.6L604.0 558.7L610.7 556.4L620.0 558.3M512.0 518.0L506.0 520.7L498.4 531.6M511.7 530.0L507.3 561.3M518.0 560.9L501.3 564.0L503.7 582.0L510.7 585.3M484.4 565.3L488.9 569.7L486.7 574.9L482.0 574.9L480.4 570.7L484.4 565.3M596.3 514.0L600.7 510.3M608.0 523.3L610.7 536.7L611.7 554.7M791.3 474.0L793.3 479.3L781.6 480.4L777.3 487.3L774.0 498.4L785.3 497.3L788.7 519.3L772.7 523.3L774.4 535.6L756.7 534.7L753.3 546.7L762.0 551.7L762.9 559.3L749.3 578.4L738.0 572.4L733.3 581.3L730.0 586.0M698.7 474.0L701.6 488.0L694.7 488.4L688.7 492.7L681.3 487.3L676.0 480.7L697.3 483.1M681.3 487.3L676.0 492.7L676.7 500.0L680.0 506.0L670.0 508.4L653.1 503.3L646.7 512.7M652.0 525.7L674.4 526.7L677.1 539.6L683.3 543.1L685.3 553.6L675.3 556.4L679.7 568.7L693.3 564.3L698.7 567.3L700.7 576.0L697.6 584.4L708.0 584.7M650.0 527.3L654.0 536.0L647.3 542.3L652.7 556.0L658.0 564.0L660.7 573.3L665.3 577.7L670.7 578.7L681.3 585.3M665.3 577.7L666.7 586.0M652.7 533.3L648.0 538.7L640.7 540.0L638.7 547.3L640.0 554.0L630.7 573.7L622.7 573.3L620.7 559.3L620.0 558.7M638.7 547.3L642.7 543.3L645.6 543.6L654.7 579.3L654.9 586.0M630.7 573.7L632.9 580.0L630.4 586.0M502.0 570.0L503.3 582.3L510.4 585.3L506.7 594.7L515.3 600.4L527.3 602.4L536.7 614.3L544.7 615.6L551.6 623.6L557.3 620.4L557.7 613.3L569.3 615.3L570.3 625.3L574.7 629.1L583.3 628.4L592.7 627.3L598.7 632.0L615.3 628.0L617.3 616.7L622.7 611.6L621.6 604.9L620.9 595.3L624.0 590.0L630.7 586.7L632.9 580.4L629.7 574.0L622.3 573.3L622.0 570.0M632.0 570.0L629.7 574.0M651.3 570.0L654.0 578.0L655.6 591.3L654.7 608.0M654.7 609.3L658.7 612.7L659.6 617.7L655.3 624.0L646.0 625.7L640.0 624.0L637.3 620.4L639.3 615.3L644.7 612.0L654.7 609.3M762.7 560.0L756.0 567.7L749.6 578.4L738.4 572.3L733.3 581.3L723.3 593.3L711.3 590.0L707.7 584.4L697.3 584.4L700.7 573.3L698.7 566.7L694.0 564.0L679.7 568.7L676.3 560.0M655.3 560.0L658.7 564.7L660.3 573.3L664.7 577.3L670.4 578.4L702.7 599.3L703.7 604.0M664.7 577.3L667.3 586.0L671.3 589.1L674.9 600.0L688.7 614.7M674.9 600.0L672.4 606.0L673.3 622.0M703.7 604.0L707.7 605.6L708.0 610.7L706.4 613.3L703.3 614.4L698.4 613.3L698.3 610.4L703.7 604.0M673.3 622.0L679.7 622.4L678.4 626.0L675.3 627.7L670.7 626.7L671.7 623.7L673.3 622.0" fill="none" stroke="#3c5517" stroke-width="1" stroke-linejoin="round" shape-rendering="crispEdges"/><path d="M523.2 396.3L542.6 392.9L542.9 382.9L544.7 381.9L547.5 385.4L547.5 396.8L562.7 403.2L581.9 397.3L575.7 386.5L586.3 397.9L582.9 403.2L570.1 405.9L571.2 411.2L580.8 415.7L586.7 413.9L596.3 403.7L591.7 414.4L597.3 424.0L615.5 437.3L627.2 435.2L647.5 417.1L646.9 394.1L653.9 370.1L659.2 369.8L662.9 376.0L657.6 382.4L652.8 394.1L652.8 406.9L656.0 407.1L653.5 414.4L653.9 417.1L661.7 418.1L652.8 422.9L634.7 438.9L632.0 445.3L631.5 446.4L636.8 463.5L638.9 465.8L663.5 465.1L673.6 457.1L668.8 465.1L670.4 467.2L676.3 467.2L670.9 474.1L677.3 480.5L670.4 477.3L662.9 472.0L653.9 471.5L635.2 474.7L631.5 477.3L630.9 481.1L634.7 485.3L642.7 509.9L646.9 512.5L650.7 527.5L639.5 513.6L628.3 496.0L619.7 493.3L610.7 495.5L605.9 509.9L608.0 523.7L604.8 522.7L600.5 510.4L603.7 500.8L598.9 480.5L596.3 473.1L581.3 461.9L572.3 470.4L568.5 477.9L545.1 475.0L536.0 476.8L520.0 477.9L518.5 475.3L520.0 473.1L530.7 471.5L546.1 470.1L566.9 470.9L566.9 465.6L581.3 453.7L586.7 455.5L592.5 461.3L601.6 472.0L605.3 471.5L610.7 466.7L611.7 462.9L611.5 456.0L610.1 449.6L607.5 444.3L607.5 444.3L602.1 435.7L579.7 421.9L571.2 419.2L559.5 421.0L563.2 414.9L561.6 406.9L542.6 397.5L523.7 399.7Z" fill="#67992a" stroke="#67992a" stroke-width="0.6" stroke-linejoin="round"/><g stroke="#fff" stroke-opacity="0.105" stroke-width="1" shape-rendering="crispEdges"><line x1="240.5" y1="155" x2="240.5" y2="732"/><line x1="616.5" y1="155" x2="616.5" y2="732"/><line x1="992.5" y1="155" x2="992.5" y2="732"/><line x1="95" y1="443.5" x2="1138" y2="443.5"/></g><g stroke="#cc2c1a" stroke-width="1" fill="none"><circle cx="616.5" cy="443.5" r="5"/><path d="M616.5 423V463.5M596 443.5H637"/></g></svg>
<div class="a" style="left:1138px;top:155px;width:16px;height:577px;background:#fafafa"></div>
<div class="a" style="left:95px;top:732px;width:1001px;height:16px;background:#fafafa"></div>
<div class="a" style="left:1096px;top:732px;width:58px;height:16px;background:#ececec"></div>
<div class="a" style="left:1143.2px;top:303.2px;width:7.6px;height:278.6px;background:#808080;border-radius:4px"></div>
<div class="a" style="left:155.5px;top:737px;width:881px;height:8px;background:#808080;border-radius:4px"></div>
<div class="a" style="left:72px;top:747px;width:1082px;height:3px;background:linear-gradient(#dcdcdc,#b8b8b8 50%,#d8d8d8)"></div>
<div class="a" style="left:72px;top:750px;width:1082px;height:20px;background:#fff"></div>
<div class="a" style="left:72px;top:770px;width:1082px;height:1px;background:#b0b0b0"></div>
<div class="a" style="left:72px;top:771px;width:1082px;height:27px;background:#ececec"></div>
<div class="a" style="left:1144px;top:750px;width:7.2px;height:18px;background:#808080;border-radius:0 0 3.6px 3.6px"></div>
<div class="a" style="left:153px;top:776px;width:974px;height:18px;background:#fff"></div>
<div class="a" style="left:1127px;top:772px;width:26px;height:26px;background:linear-gradient(#e8e8e8,#f6f6f6);border:1px solid #b4b4b4"></div>
<svg style="left:1132px;top:778px" width="16" height="14" viewBox="1132 778 16 14"><rect x="1133.5" y="780.7" width="13" height="8.8" fill="#ececec" stroke="#3a3a3a" stroke-width="0.9"/><rect x="1133" y="780.2" width="14" height="2.9" fill="#111"/><rect x="1143.6" y="781" width="1.2" height="1" fill="#aaa"/></svg>
<div class="a" style="left:1153px;top:747px;width:2px;height:51px;background:#e6e6e6"></div>
<div class="a" style="left:1155px;top:108px;width:299px;height:22px;background:linear-gradient(#eeeeee,#e4e4e4 50%,#d6d6d6)"></div>
<div class="a" style="left:1155px;top:130px;width:299px;height:26px;background:#b0b0b0"></div>
<div class="a" style="left:1155px;top:156px;width:299px;height:151px;background:#fff"></div>
<div class="a" style="left:1155px;top:307px;width:299px;height:1.6px;background:#b4b4b4"></div>
<div class="a" style="left:1155px;top:308.6px;width:299px;height:23px;background:linear-gradient(#eeeeee,#e4e4e4 50%,#d4d4d4)"></div>
<div class="a" style="left:1155px;top:331px;width:299px;height:27px;background:#b0b0b0"></div>
<div class="a" style="left:1155px;top:358px;width:299px;height:440px;background:#fff"></div>
<div class="a" style="left:1155px;top:131px;width:1px;height:667px;background:#cdcdcd"></div>
<div class="a" style="left:1156px;top:217.1px;width:298px;height:19.6px;background:#d3d3d3"></div>
<div class="a" style="left:1156px;top:378px;width:298px;height:19.8px;background:#0a4fd6"></div>
<div class="a" style="left:1156.5px;top:131px;width:35.6px;height:24px;border:none;background:linear-gradient(#f3f3f3,#ebebeb 45%,#f6f6f6)"></div>
<div class="a" style="left:1193.86px;top:131px;width:35.6px;height:24px;border:none;background:linear-gradient(#f3f3f3,#ebebeb 45%,#f6f6f6)"></div>
<div class="a" style="left:1231.22px;top:131px;width:35.6px;height:24px;border:none;background:linear-gradient(#f3f3f3,#ebebeb 45%,#f6f6f6)"></div>
<div class="a" style="left:1268.58px;top:131px;width:35.6px;height:24px;border:none;background:linear-gradient(#f3f3f3,#ebebeb 45%,#f6f6f6)"></div>
<div class="a" style="left:1305.94px;top:131px;width:35.6px;height:24px;border:none;background:linear-gradient(#f3f3f3,#ebebeb 45%,#f6f6f6)"></div>
<div class="a" style="left:1343.3px;top:131px;width:35.6px;height:24px;border:none;background:linear-gradient(#f3f3f3,#ebebeb 45%,#f6f6f6)"></div>
<div class="a" style="left:1380.66px;top:131px;width:35.6px;height:24px;border:none;background:linear-gradient(#f3f3f3,#ebebeb 45%,#f6f6f6)"></div>
<div class="a" style="left:1418.02px;top:131px;width:35.6px;height:24px;border:none;background:linear-gradient(#f3f3f3,#ebebeb 45%,#f6f6f6)"></div>
<div class="a" style="left:1156.5px;top:332px;width:58px;height:24.4px;border:none;background:linear-gradient(#f3f3f3,#ebebeb 45%,#f6f6f6)"></div>
<div class="a" style="left:1216.28px;top:332px;width:58px;height:24.4px;border:none;background:linear-gradient(#f3f3f3,#ebebeb 45%,#f6f6f6)"></div>
<div class="a" style="left:1276.06px;top:332px;width:58px;height:24.4px;border:none;background:linear-gradient(#f3f3f3,#ebebeb 45%,#f6f6f6)"></div>
<div class="a" style="left:1335.84px;top:332px;width:58px;height:24.4px;border:none;background:linear-gradient(#f3f3f3,#ebebeb 45%,#f6f6f6)"></div>
<div class="a" style="left:1395.62px;top:332px;width:58px;height:24.4px;border:none;background:linear-gradient(#f3f3f3,#ebebeb 45%,#f6f6f6)"></div>
<svg style="left:1140px;top:108px" width="320" height="340" viewBox="1140 108 320 340"><defs>
<g id="eye"><path d="M-7.7 0.3 Q-6.6 -3.4 -3.6 -4.8 Q0 -6.2 3.8 -4.9 Q6.4 -3.6 7.6 0.3 Q6.6 2.6 4.4 4.2 Q1.6 5.9 -1 5.6 Q-4.2 5 -5.6 3.2 Q-7 1.6 -7.7 0.3Z"/><path d="M-5 0.2 Q-3.6 -2.2 0 -2.4 Q3.4 -2.2 4.6 0.2 Q3 3.5 0 3.5 Q-3.2 3.5 -5 0.2Z" fill="#fff" class="ew"/><circle cx="0" cy="-0.5" r="2.75"/><circle cx="-1" cy="-1.3" r="0.7" fill="#9a9a9a"/></g>
<g id="lock"><path d="M-3.3 0 V-2.6 Q-3.3 -6 0 -6 Q3.3 -6 3.3 -2.6 V0" fill="none" stroke-width="1.5"/><rect x="-4.9" y="-0.4" width="9.8" height="7.4" stroke="none"/></g>
<g id="pclT"><path d="M0 0 L2.6 -1.2 H14 V1.2 H2.6Z" fill="#e6a030" stroke="#9a6418" stroke-width="0.5"/><path d="M0 0 L2.6 -1.2 V1.2Z" fill="#e8d4a8" stroke="#9a6418" stroke-width="0.3"/><path d="M0 0 L1 -0.5 V0.5Z" fill="#333"/><path d="M14 -1.3 H17 Q17.9 -1.3 17.9 0 Q17.9 1.3 17 1.3 H14Z" fill="#e62222"/><path d="M3 -0.3H14" stroke="#f6c860" stroke-width="0.6"/></g><g id="pcl"><path d="M0 0 L2.6 -1.2 H14 V1.2 H2.6Z" fill="#dcb46e" stroke="#b88a3c" stroke-width="0.4"/><path d="M0 0 L2.6 -1.2 V1.2Z" fill="#f0e2c4"/><path d="M0 0 L1 -0.5 V0.5Z" fill="#444"/><path d="M14 -1.3 H17 Q17.9 -1.3 17.9 0 Q17.9 1.3 17 1.3 H14Z" fill="#e8485c"/><path d="M3 -0.3H14" stroke="#f0d498" stroke-width="0.6"/></g>

</defs><circle cx="1164" cy="117.9" r="7" fill="#5e5e5e"/><path d="M1161 114.9l6 6M1167 114.9l-6 6" stroke="#f0f0f0" stroke-width="2.1" stroke-linecap="round"/><circle cx="1181.8" cy="117.9" r="7" fill="#5e5e5e"/><rect x="1181.4" y="115.30000000000001" width="4.6" height="4.4" fill="none" stroke="#f2f2f2" stroke-width="1.1"/><rect x="1178.4" y="117.5" width="5.4" height="4.4" fill="#5e5e5e" stroke="#f2f2f2" stroke-width="1.1"/><circle cx="1164" cy="318.9" r="7" fill="#5e5e5e"/><path d="M1161 315.9l6 6M1167 315.9l-6 6" stroke="#f0f0f0" stroke-width="2.1" stroke-linecap="round"/><circle cx="1181.8" cy="318.9" r="7" fill="#5e5e5e"/><rect x="1181.4" y="316.29999999999995" width="4.6" height="4.4" fill="none" stroke="#f2f2f2" stroke-width="1.1"/><rect x="1178.4" y="318.5" width="5.4" height="4.4" fill="#5e5e5e" stroke="#f2f2f2" stroke-width="1.1"/><use href="#eye" x="1174.0" y="142.8" fill="#000"/><use href="#eye" x="1211.2" y="142.8" fill="#000" opacity="0.38"/><path d="M1242.6 143.1H1254.6M1248.6 137.1V149.1" stroke="#a00000" stroke-width="3.4" fill="none"/><path d="M1243.0 143.1H1254.1999999999998M1248.6 137.5V148.7" stroke="#ff0000" stroke-width="2.5" fill="none"/><path d="M1280.0 143H1292.0" stroke="#a00000" stroke-width="3.2" fill="none"/><path d="M1280.4 143H1291.6" stroke="#ff0000" stroke-width="2.3" fill="none"/><text x="1323.9" y="147.4" text-anchor="middle" font-family="'Liberation Sans',sans-serif" font-size="11.6" fill="#111" letter-spacing="0.5">a|b</text><g transform="translate(1354.3 149.6) rotate(-45) scale(1.05)"><use href="#pclT" transform="scale(1 1.35)"/></g><g transform="translate(1397.9 142.6)" opacity="0.75"><rect x="-5.4" y="-6.4" width="10.6" height="12.8" fill="#f0f0f4" stroke="#c8c8d8" stroke-width="0.6"/><path d="M-3 -5 Q2.6 -5 2.6 -0.5 V2 H4.8 L1.4 6 L-2 2 H0.2 V-0.5 Q0.2 -2.6 -3 -2.6Z" fill="#7f96f0"/></g><g transform="translate(1435.5 143.2)"><rect x="-4.5" y="-4.5" width="9" height="9" rx="0.6" fill="#e9805c" stroke="#dc4c2c" stroke-width="1"/><path d="M-2 -2l4 4M2 -2l-4 4" stroke="#fff" stroke-width="1.4"/></g><use href="#eye" x="1185.1" y="344" fill="#000"/><use href="#eye" x="1244.9" y="344" fill="#000" opacity="0.38"/><path d="M1298.6 344.2H1310.6M1304.6 338.2V350.2" stroke="#a00000" stroke-width="3.4" fill="none"/><path d="M1299.0 344.2H1310.1999999999998M1304.6 338.59999999999997V349.8" stroke="#ff0000" stroke-width="2.5" fill="none"/><path d="M1358.4 344.2H1370.4" stroke="#a00000" stroke-width="3.2" fill="none"/><path d="M1358.8000000000002 344.2H1370.0" stroke="#ff0000" stroke-width="2.3" fill="none"/><g transform="translate(1417.7 350.6) rotate(-45) scale(1.05)"><use href="#pclT" transform="scale(1 1.35)"/></g><use href="#eye" x="1168.8" y="166.8" fill="#000"/><use href="#eye" x="1168.8" y="186.8" fill="#000"/><use href="#eye" x="1168.8" y="206.8" fill="#000"/><use href="#eye" x="1168.8" y="226.8" fill="#273349"/><use href="#eye" x="1168.8" y="246.8" fill="#000"/><use href="#eye" x="1168.8" y="266.8" fill="#000"/><g transform="translate(1184.4 233.2) rotate(-43)"><use href="#pcl" transform="scale(1 1.3)"/></g><rect x="1161.7" y="364.7" width="14.7" height="7.6" fill="#ffffff" stroke="#000" stroke-width="1"/><use href="#eye" x="1422.9" y="367.7" fill="#000"/><use href="#lock" x="1445.1" y="367.7" fill="#b4b4b4" stroke="#b4b4b4"/><rect x="1161.7" y="384.7" width="14.7" height="7.6" fill="#c4b48a" stroke="#8a8264" stroke-width="0.7"/><g transform="translate(1422.9 387.7)" fill="#273b6c"><path d="M-7.7 0.3 Q-6.6 -3.4 -3.6 -4.8 Q0 -6.2 3.8 -4.9 Q6.4 -3.6 7.6 0.3 Q6.6 2.6 4.4 4.2 Q1.6 5.9 -1 5.6 Q-4.2 5 -5.6 3.2 Q-7 1.6 -7.7 0.3Z"/><path d="M-5 0.2 Q-3.6 -2.2 0 -2.4 Q3.4 -2.2 4.6 0.2 Q3 3.5 0 3.5 Q-3.2 3.5 -5 0.2Z" fill="#0a4fd6"/><circle cx="0" cy="-0.5" r="2.75"/></g><use href="#lock" x="1445.1" y="387.7" fill="#aab8d6" stroke="#aab8d6"/><rect x="1161.7" y="404.7" width="14.7" height="7.6" fill="#c0c0c0" stroke="#000" stroke-width="1"/><use href="#eye" x="1422.9" y="407.7" fill="#000"/><use href="#lock" x="1445.1" y="407.7" fill="#b4b4b4" stroke="#b4b4b4"/><rect x="1161.7" y="424.7" width="14.7" height="7.6" fill="#6b9f2f" stroke="#000" stroke-width="1"/><use href="#eye" x="1422.9" y="427.7" fill="#000"/><use href="#lock" x="1445.1" y="427.7" fill="#b4b4b4" stroke="#b4b4b4"/><g transform="translate(1395 394.2) rotate(-45)"><use href="#pcl" transform="scale(1 1.3)"/></g></svg>
<div class="a" style="left:1455px;top:108px;width:45px;height:690px;background:linear-gradient(90deg,#f0f0f0 0,#e8e8e8 25%,#d2d2d2 70%,#c2c2c2 100%)"></div>
<div class="a" style="left:1454px;top:108px;width:1px;height:690px;background:#d2d2d2"></div>
<div class="a" style="left:1498px;top:108px;width:2px;height:690px;background:#bdbdbd"></div>
<svg style="left:1455px;top:108px" width="45" height="420" viewBox="1455 108 45 420"><rect x="1462" y="116" width="2" height="2" fill="#999"/><rect x="1468" y="116" width="2" height="2" fill="#999"/><rect x="1474" y="116" width="2" height="2" fill="#999"/><rect x="1480" y="116" width="2" height="2" fill="#999"/><rect x="1486" y="116" width="2" height="2" fill="#999"/><rect x="1456.4" y="120.2" width="46" height="42.6" rx="5.5" fill="#b2b2b2"/><rect x="1456.4" y="167.2" width="46" height="42.6" rx="5.5" fill="#b2b2b2"/><rect x="1456.4" y="418.4" width="46" height="42.6" rx="5.5" fill="#b2b2b2"/><path d="M1458 262.4H1500" stroke="#4a4a4a" stroke-width="1" stroke-dasharray="1 2" fill="none"/><path d="M1458 410.4H1500" stroke="#4a4a4a" stroke-width="1" stroke-dasharray="1 2" fill="none"/><rect x="1463.4" y="127.60000000000001" width="27.2" height="26.9" fill="#fff" stroke="#1c1c1c" stroke-width="0.9"/><rect x="1463.4" y="127.60000000000001" width="27.2" height="4.4" fill="#000"/><rect x="1464.3" y="128.4" width="2.9" height="2.9" fill="#fff"/><rect x="1463.4" y="174.6" width="27.2" height="26.9" fill="#fff" stroke="#1c1c1c" stroke-width="0.9"/><rect x="1463.4" y="174.6" width="27.2" height="4.4" fill="#000"/><rect x="1464.3" y="175.39999999999998" width="2.9" height="2.9" fill="#fff"/><rect x="1463.4" y="221.6" width="27.2" height="26.9" fill="#fff" stroke="#1c1c1c" stroke-width="0.9"/><rect x="1463.4" y="221.6" width="27.2" height="4.4" fill="#000"/><rect x="1464.3" y="222.39999999999998" width="2.9" height="2.9" fill="#fff"/><rect x="1463.4" y="277.7" width="27.2" height="26.9" fill="#fff" stroke="#1c1c1c" stroke-width="0.9"/><rect x="1463.4" y="277.7" width="27.2" height="4.4" fill="#000"/><rect x="1464.3" y="278.5" width="2.9" height="2.9" fill="#fff"/><rect x="1463.4" y="323.59999999999997" width="27.2" height="26.9" fill="#fff" stroke="#1c1c1c" stroke-width="0.9"/><rect x="1463.4" y="323.59999999999997" width="27.2" height="4.4" fill="#000"/><rect x="1464.3" y="324.4" width="2.9" height="2.9" fill="#fff"/><rect x="1463.4" y="369.59999999999997" width="27.2" height="26.9" fill="#fff" stroke="#1c1c1c" stroke-width="0.9"/><rect x="1463.4" y="369.59999999999997" width="27.2" height="4.4" fill="#000"/><rect x="1464.3" y="370.4" width="2.9" height="2.9" fill="#fff"/><rect x="1463.4" y="425.7" width="27.2" height="26.9" fill="#fff" stroke="#1c1c1c" stroke-width="0.9"/><rect x="1463.4" y="425.7" width="27.2" height="4.4" fill="#000"/><rect x="1464.3" y="426.5" width="2.9" height="2.9" fill="#fff"/><rect x="1463.4" y="472.59999999999997" width="27.2" height="26.9" fill="#fff" stroke="#1c1c1c" stroke-width="0.9"/><rect x="1463.4" y="472.59999999999997" width="27.2" height="4.4" fill="#000"/><rect x="1464.3" y="473.4" width="2.9" height="2.9" fill="#fff"/><g transform="translate(1477 143.2)"><path d="M-6.6 -2.6 L-1.6 -5.4 V5.2 L-6.6 8Z" fill="#8a8a8a" stroke="#333" stroke-width="0.6"/><path d="M-4.6 -3.4 L1.4 -6.6 V4.6 L-4.6 7.6Z" fill="#d8d8d8" stroke="#333" stroke-width="0.6"/><path d="M-2.4 -3.6 L6.4 -8 V3 L-2.4 7.4Z" fill="#fff" stroke="#333" stroke-width="0.6"/><path d="M0 4 L4.6 -3.6 L4.4 1.6 M1.2 2.2 L4.4 0.2" stroke="#e8262a" stroke-width="0.9" fill="none"/></g><rect x="1470.6" y="183.79999999999998" width="10.6" height="7.6" fill="#f6efc8" stroke="#8a8670" stroke-width="0.7"/><circle cx="1479.4" cy="191.2" r="4.4" fill="#f6efc8" fill-opacity="0.9" stroke="#8a8670" stroke-width="0.7"/><rect x="1468.8" y="231.79999999999998" width="16.4" height="10.6" rx="2.2" fill="#f7f7f5" stroke="#c4d2ec" stroke-width="0.9"/><rect x="1466.4" y="284.9" width="4.6" height="3.4" rx="0.8" fill="#000"/><rect x="1473.6" y="285.0" width="14" height="3" rx="0.5" fill="#fff" stroke="#555" stroke-width="0.6"/><rect x="1466.4" y="290.9" width="4.6" height="3.4" rx="0.8" fill="#000"/><rect x="1473.6" y="291.0" width="14" height="3" rx="0.5" fill="#fff" stroke="#555" stroke-width="0.6"/><rect x="1466.4" y="296.9" width="4.6" height="3.4" rx="0.8" fill="#000"/><rect x="1473.6" y="297.0" width="14" height="3" rx="0.5" fill="#fff" stroke="#555" stroke-width="0.6"/><g transform="translate(1477 323.2)"><ellipse cx="0" cy="9.6" rx="7" ry="1.6" fill="#5a5a5a"/><path d="M-7 9.8 L-1.3 16.4 V21.6 L1.6 23 V16.4 L7 9.8Z" fill="#c4c4c4" stroke="#6a6a6a" stroke-width="0.5"/><path d="M-1.3 16.4 V21.6 L1.6 23 V16.4" fill="#9a9a9a"/></g><g transform="translate(1477 384.8)"><path d="M-8 -6 L-4 -3.4 V3.4 L-8 6Z" fill="#fff" stroke="#444" stroke-width="0.7"/><rect x="-4" y="-3.4" width="11.6" height="6.8" rx="1.6" fill="#8a8a8a" stroke="#555" stroke-width="0.5"/><rect x="-3.2" y="-3" width="2.6" height="6" fill="#f4f4f4"/><path d="M-10 0H10" stroke="#ff9a9a" stroke-width="0.8" stroke-dasharray="2 1"/></g><path d="M1466 434.1h12M1466 437.5h10M1466 440.90000000000003h14M1466 444.3h15" stroke="#9a9a9a" stroke-width="1.1" stroke-dasharray="2.4 0.7 1.6 0.6"/><text x="1472" y="451.5" fill="#111" font-family="'Liberation Sans',sans-serif" font-size="3" textLength="15.6" lengthAdjust="spacingAndGlyphs">command</text><path d="M1463.4 447.90000000000003H1490.6" stroke="#222" stroke-width="0.6"/><circle cx="1467" cy="450.3" r="0.9" fill="none" stroke="#333" stroke-width="0.4"/><g transform="translate(1477 488.59999999999997)"><rect x="-6" y="-6.4" width="12" height="13" rx="0.8" fill="#c58a2c" stroke="#a87218" stroke-width="0.5"/><rect x="-4.4" y="-5" width="8.8" height="10.4" fill="#f7f7f7"/><path d="M2 5.4 H4.4 V3Z" fill="#9a9a9a"/><rect x="-3" y="-7.6" width="6" height="3.2" rx="0.8" fill="#a3a59c" stroke="#77796f" stroke-width="0.4"/><path d="M-3 -2h6M-3 -0.4h6M-3 1.2h6M-3 2.8h4" stroke="#d0d0d0" stroke-width="0.6"/></g></svg>
<div class="a" style="left:0px;top:798px;width:1500px;height:46px;background:#dcdcdc"></div>
<div class="a" style="left:0px;top:798px;width:1500px;height:1px;background:#d0d0d0"></div>
<div class="a" style="left:254px;top:806px;width:1px;height:32px;background:#8a8a8a"></div>
<div class="a" style="left:506.5px;top:819.5px;width:5px;height:5px;background:#c6c6c6;border-radius:50%"></div>
<div class="a" style="left:940.5px;top:819.5px;width:5px;height:5px;background:#c6c6c6;border-radius:50%"></div>
<div class="a" style="left:1269.5px;top:819.5px;width:5px;height:5px;background:#c6c6c6;border-radius:50%"></div>
<svg style="left:717px;top:806px" width="18" height="30" viewBox="0 0 18 30"><rect x="0.6" y="0.6" width="16.8" height="28.6" rx="8.4" ry="8.6" fill="#fff" stroke="#333" stroke-width="0.9"/><path d="M0.8 13.8 Q9 11.8 17.2 13.8" stroke="#333" stroke-width="1" fill="none"/><path d="M9 0.8V2.4M9 8.8V12.8" stroke="#333" stroke-width="0.9"/><ellipse cx="9" cy="5.6" rx="1.5" ry="3.2" fill="#fff" stroke="#333" stroke-width="0.9"/></svg>
<span class="t" style="left:14.30px;top:0.79px;height:19px;line-height:19px;font-size:13.6px;letter-spacing:-0.114px;color:#242424;-webkit-text-stroke:0.2px #242424;">Fichier</span>
<span class="t" style="left:66.90px;top:0.79px;height:19px;line-height:19px;font-size:13.6px;letter-spacing:-0.054px;color:#242424;-webkit-text-stroke:0.2px #242424;">Édition</span>
<span class="t" style="left:120.10px;top:0.79px;height:19px;line-height:19px;font-size:13.6px;letter-spacing:0.118px;color:#242424;-webkit-text-stroke:0.2px #242424;">Affichage</span>
<span class="t" style="left:190.10px;top:0.79px;height:19px;line-height:19px;font-size:13.6px;letter-spacing:-0.065px;color:#242424;-webkit-text-stroke:0.2px #242424;">Sélectionner</span>
<span class="t" style="left:277.50px;top:0.79px;height:19px;line-height:19px;font-size:13.6px;letter-spacing:-0.244px;color:#242424;-webkit-text-stroke:0.2px #242424;">Dessin</span>
<span class="t" style="left:330.10px;top:0.79px;height:19px;line-height:19px;font-size:13.6px;letter-spacing:-0.018px;color:#242424;-webkit-text-stroke:0.2px #242424;">Cotation</span>
<span class="t" style="left:393.50px;top:0.79px;height:19px;line-height:19px;font-size:13.6px;letter-spacing:0.118px;color:#242424;-webkit-text-stroke:0.2px #242424;">Modifier</span>
<span class="t" style="left:455.40px;top:0.79px;height:19px;line-height:19px;font-size:13.6px;letter-spacing:-0.080px;color:#242424;-webkit-text-stroke:0.2px #242424;">Accrochage</span>
<span class="t" style="left:539.60px;top:0.79px;height:19px;line-height:19px;font-size:13.6px;letter-spacing:-0.317px;color:#242424;-webkit-text-stroke:0.2px #242424;">Infos</span>
<span class="t" style="left:580.30px;top:0.79px;height:19px;line-height:19px;font-size:13.6px;letter-spacing:-0.280px;color:#242424;-webkit-text-stroke:0.2px #242424;">Calque</span>
<span class="t" style="left:634.90px;top:0.79px;height:19px;line-height:19px;font-size:13.6px;letter-spacing:-0.238px;color:#242424;-webkit-text-stroke:0.2px #242424;">Bloc</span>
<span class="t" style="left:673.60px;top:0.79px;height:19px;line-height:19px;font-size:13.6px;letter-spacing:-0.280px;color:#242424;-webkit-text-stroke:0.2px #242424;">Fenêtre</span>
<span class="t" style="left:731.40px;top:0.79px;height:19px;line-height:19px;font-size:13.6px;letter-spacing:-0.255px;color:#242424;-webkit-text-stroke:0.2px #242424;">Divers</span>
<span class="t" style="left:781.60px;top:0.79px;height:19px;line-height:19px;font-size:13.6px;letter-spacing:-0.280px;color:#242424;-webkit-text-stroke:0.2px #242424;">Aide</span>
<span class="t" style="left:606.40px;top:111.98px;height:16px;line-height:16px;font-size:11.6px;letter-spacing:0.202px;color:#161616;-webkit-text-stroke:0.25px #161616;">* park.dxf</span>
<span class="t" style="left:1116.40px;top:731.50px;height:18px;line-height:18px;font-size:13px;letter-spacing:-0.475px;color:#0c0c0c;-webkit-text-stroke:0.15px #0c0c0c;">0.1 &lt; 1</span>
<span class="t" style="left:77.30px;top:749.50px;height:18px;line-height:18px;font-size:13px;letter-spacing:0.065px;color:#0a0ad4;-webkit-text-stroke:0.2px #0a0ad4;font-style:italic">Commande:</span>
<span class="t" style="left:152.80px;top:749.50px;height:18px;line-height:18px;font-size:13px;letter-spacing:0.343px;color:#0a0ad4;-webkit-text-stroke:0.2px #0a0ad4;">blockedit</span>
<span class="t" style="left:73.00px;top:775.82px;height:19px;line-height:19px;font-size:13.5px;letter-spacing:-0.170px;color:#0a0a0a;-webkit-text-stroke:0.2px #0a0a0a;">Commande :</span>
<span class="t" style="left:1282.60px;top:110.98px;height:16px;line-height:16px;font-size:11.6px;letter-spacing:0.153px;color:#242424;-webkit-text-stroke:0.25px #242424;">Liste des blocs</span>
<span class="t" style="left:1276.70px;top:311.98px;height:16px;line-height:16px;font-size:11.6px;letter-spacing:0.106px;color:#242424;-webkit-text-stroke:0.25px #242424;">Liste des calques</span>
<span class="t" style="left:1205.40px;top:157.36px;height:19px;line-height:19px;font-size:13.4px;letter-spacing:-0.011px;color:#0a0a0a;-webkit-text-stroke:0.15px #0a0a0a;">Model (*Model_Space)</span>
<span class="t" style="left:1205.40px;top:177.36px;height:19px;line-height:19px;font-size:13.4px;letter-spacing:-0.184px;color:#0a0a0a;-webkit-text-stroke:0.15px #0a0a0a;">Layout1 (*Paper_Space)</span>
<span class="t" style="left:1205.40px;top:197.36px;height:19px;line-height:19px;font-size:13.4px;letter-spacing:-0.096px;color:#0a0a0a;-webkit-text-stroke:0.15px #0a0a0a;">Arbre A</span>
<span class="t" style="left:1205.40px;top:217.36px;height:19px;line-height:19px;font-size:13.4px;letter-spacing:-0.201px;color:#0a0a0a;-webkit-text-stroke:0.15px #0a0a0a;">Arbre B</span>
<span class="t" style="left:1205.40px;top:237.36px;height:19px;line-height:19px;font-size:13.4px;letter-spacing:-0.333px;color:#0a0a0a;-webkit-text-stroke:0.15px #0a0a0a;">Banc</span>
<span class="t" style="left:1205.40px;top:257.36px;height:19px;line-height:19px;font-size:13.4px;letter-spacing:-0.191px;color:#0a0a0a;-webkit-text-stroke:0.15px #0a0a0a;">Poubelle</span>
<span class="t" style="left:1183.20px;top:358.16px;height:19px;line-height:19px;font-size:13.4px;letter-spacing:0.147px;color:#0c0c0c;-webkit-text-stroke:0.15px #0c0c0c;">0</span>
<span class="t" style="left:1183.20px;top:378.16px;height:19px;line-height:19px;font-size:13.4px;letter-spacing:-0.149px;color:#fff;-webkit-text-stroke:0.15px #fff;">Chemins</span>
<span class="t" style="left:1183.20px;top:398.16px;height:19px;line-height:19px;font-size:13.4px;letter-spacing:0.006px;color:#0c0c0c;-webkit-text-stroke:0.15px #0c0c0c;">Installations</span>
<span class="t" style="left:1183.20px;top:418.16px;height:19px;line-height:19px;font-size:13.4px;letter-spacing:-0.182px;color:#0c0c0c;-webkit-text-stroke:0.15px #0c0c0c;">Plantes</span>
<span class="t" style="left:2.10px;top:805.40px;height:14px;line-height:14px;font-size:9.8px;letter-spacing:0.016px;color:#141414;-webkit-text-stroke:0.25px #141414;">47.0937,12.7851</span>
<span class="t" style="left:2.10px;top:825.90px;height:14px;line-height:14px;font-size:9.8px;letter-spacing:-0.094px;color:#141414;-webkit-text-stroke:0.25px #141414;">@47.0937,12.7851</span>
<span class="t" style="left:256.00px;top:805.40px;height:14px;line-height:14px;font-size:9.8px;letter-spacing:0.277px;color:#141414;-webkit-text-stroke:0.25px #141414;">48.7984&lt;15°</span>
<span class="t" style="left:256.00px;top:825.90px;height:14px;line-height:14px;font-size:9.8px;letter-spacing:0.133px;color:#141414;-webkit-text-stroke:0.25px #141414;">@48.7984&lt;15°</span>
<span class="t" style="left:532.40px;top:815.17px;height:14px;line-height:14px;font-size:9.9px;letter-spacing:0.148px;color:#141414;-webkit-text-stroke:0.25px #141414;">Sélectionne une entité ou une région</span>
<span class="t" style="left:949.00px;top:815.17px;height:14px;line-height:14px;font-size:9.9px;letter-spacing:0.155px;color:#141414;-webkit-text-stroke:0.25px #141414;">Aucune des entités sélectionnées.</span>
<svg style="left:1140px;top:180px" width="100" height="90" viewBox="1140 180 100 90"><defs><radialGradient id="ring" cx="0.5" cy="0.5" r="0.5"><stop offset="0" stop-color="#fff" stop-opacity="0"/><stop offset="0.7" stop-color="#fff" stop-opacity="0"/><stop offset="0.82" stop-color="#f4f8fc" stop-opacity="0.35"/><stop offset="0.865" stop-color="#b0c4d7" stop-opacity="0.7"/><stop offset="0.92" stop-color="#9db5cc" stop-opacity="0.82"/><stop offset="0.965" stop-color="#adc2d5" stop-opacity="0.7"/><stop offset="0.99" stop-color="#c4d2e0" stop-opacity="0.3"/><stop offset="1" stop-color="#c8d4e0" stop-opacity="0"/></radialGradient></defs><circle cx="1186.9" cy="224.7" r="39.6" fill="url(#ring)"/><path d="M1187.4 225.3 V246.8 L1192.6 242 L1196.6 251.4 L1200.2 249.9 L1196.2 240.7 L1202.4 240.2 Z" fill="#fff" stroke="#000" stroke-width="1.1" stroke-linejoin="miter"/></svg>
</div></body></html>
